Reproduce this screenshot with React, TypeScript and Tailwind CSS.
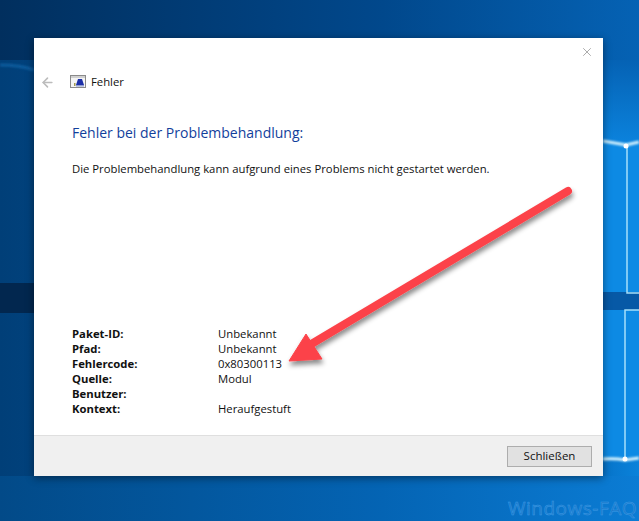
import { X, ArrowLeft } from "lucide-react";

const details = [
  { label: "Paket-ID:", value: "Unbekannt" },
  { label: "Pfad:", value: "Unbekannt" },
  { label: "Fehlercode:", value: "0x80300113" },
  { label: "Quelle:", value: "Modul" },
  { label: "Benutzer:", value: "" },
  { label: "Kontext:", value: "Heraufgestuft" },
];

const Wallpaper = () => (
  <svg className="absolute inset-0" width="639" height="521" viewBox="0 0 639 521">
    <defs>
      <linearGradient id="base" x1="0" y1="0" x2="1" y2="0">
        <stop offset="0" stopColor="#013f78" />
        <stop offset="0.9" stopColor="#0569bd" />
        <stop offset="1" stopColor="#0a82da" />
      </linearGradient>
      <linearGradient id="lower" x1="0" y1="0" x2="1" y2="0">
        <stop offset="0" stopColor="#024a88" />
        <stop offset="0.6" stopColor="#0464b4" />
        <stop offset="1" stopColor="#0b7cd4" />
      </linearGradient>
      <linearGradient id="top" x1="0" y1="0" x2="1" y2="0">
        <stop offset="0" stopColor="#012f5e" />
        <stop offset="0.6" stopColor="#01488c" />
        <stop offset="1" stopColor="#0562b4" />
      </linearGradient>
      <linearGradient id="upperRight" x1="0" y1="0" x2="0" y2="1">
        <stop offset="0" stopColor="#0562b4" />
        <stop offset="1" stopColor="#0b82dc" />
      </linearGradient>
      <filter id="glow" x="-20%" y="-200%" width="140%" height="500%">
        <feGaussianBlur stdDeviation="1.2" />
      </filter>
    </defs>
    <rect width="639" height="521" fill="url(#base)" />
    <rect width="639" height="60" fill="url(#top)" />
    <rect x="603" y="60" width="36" height="82" fill="url(#upperRight)" />
    <rect y="476" width="639" height="45" fill="url(#lower)" />
    <path d="M0 65 Q20 65 34 70" stroke="#1468ac" strokeWidth="3" fill="none" opacity="0.7" filter="url(#glow)" />
    <rect y="283" width="34" height="30" fill="#02274f" />
    {/* window panes on the right */}
    <rect x="603" y="142" width="36" height="150" fill="#0d8ae4" />
    <rect x="603" y="310" width="36" height="150" fill="#0d8ae4" />
    <rect x="603" y="292" width="36" height="18" fill="#0759a6" />
    <path d="M627 145 V293 H639 M625 459 V310 H639" stroke="#a5e0fa" strokeWidth="1.5" fill="none" />
    <path d="M603 141 L626 145 L639 142" stroke="#d0f0fd" strokeWidth="3" fill="none" filter="url(#glow)" />
    <path d="M603 459 Q615 458 625 460 L639 458" stroke="#d8f3fd" strokeWidth="3" fill="none" filter="url(#glow)" />
    <circle cx="625" cy="459" r="2.5" fill="#ffffff" />
    <circle cx="626" cy="146" r="2.5" fill="#ffffff" />
  </svg>
);

const ErrorIcon = () => (
  <svg width="16" height="14" viewBox="0 0 16 14">
    <rect x="0.5" y="0.5" width="15" height="12" fill="#f4f4f4" stroke="#8a8a8a" />
    <rect x="1" y="1" width="14" height="2" fill="#d0d0d0" />
    <path d="M6 10 L8 4 H12 L14 10Z" fill="#1c2fa8" />
    <rect x="6" y="10" width="8" height="1.5" fill="#8e9bd0" />
    <rect x="4" y="8" width="1.5" height="3" fill="#a09a50" />
  </svg>
);

const Arrow = () => (
  <svg className="absolute inset-0 pointer-events-none" width="639" height="521" viewBox="0 0 639 521">
    <defs>
      <filter id="shadow" x="-10%" y="-10%" width="120%" height="125%">
        <feDropShadow dx="1" dy="4" stdDeviation="2.5" floodColor="#000000" floodOpacity="0.45" />
      </filter>
    </defs>
    <g filter="url(#shadow)">
      <path d="M568 191 L308 346" stroke="#fc4349" strokeWidth="8" strokeLinecap="round" />
      <path d="M289 361 L306 334 L322 359Z" fill="#fc4349" stroke="#fc4349" strokeLinejoin="round" />
    </g>
  </svg>
);

export default function App() {
  return (
    <div className="relative w-[639px] h-[521px] overflow-hidden font-['Open_Sans','Noto_Sans',sans-serif] text-[#111111]">
      <Wallpaper />

      <div className="relative pl-[34px] pt-[38px]">
        <div className="flex flex-col w-[569px] h-[438px] bg-white shadow-[0_2px_8px_rgba(0,0,0,0.45)]">
          <div className="flex justify-end pt-[7px] pr-[9px] h-[26px]">
            <X className="w-[14px] h-[14px] text-[#8c8c8c]" strokeWidth={1.25} />
          </div>

          <div className="flex items-center h-[36px] pl-[6px]">
            <ArrowLeft className="w-[15px] h-[15px] text-[#bcbcbc]" strokeWidth={2.5} />
            <div className="ml-[15px] flex items-center gap-[5px]">
              <ErrorIcon />
              <span className="text-[11.3px]">Fehler</span>
            </div>
          </div>

          <div className="flex flex-col flex-1 pl-[38px]">
            <h1 className="mt-[23px] text-[14px] leading-[20px] text-[#123f9c]">
              Fehler bei der Problembehandlung:
            </h1>
            <p className="mt-[18px] text-[11.3px] leading-[16px]">
              Die Problembehandlung kann aufgrund eines Problems nicht gestartet werden.
            </p>

            <div className="mt-auto pb-[19px] grid grid-cols-[146px_1fr] text-[11.3px] leading-[15px]">
              {details.map((row) => (
                <div key={row.label} className="contents">
                  <span className="font-bold">{row.label}</span>
                  <span>{row.value}</span>
                </div>
              ))}
            </div>
          </div>

          <div className="flex items-center justify-end h-[41px] pr-[11px] bg-[#f0f0f0] border-t border-[#dfdfdf]">
            <button className="w-[85px] h-[21px] bg-[#e1e1e1] border border-[#adadad] text-[11.5px] leading-none">
              Schließen
            </button>
          </div>
        </div>
      </div>

      <Arrow />

      <span className="absolute right-[2px] bottom-0 text-[19px] leading-[26px] tracking-[0.5px] whitespace-nowrap text-[#1a78c8] [-webkit-text-stroke:0.5px_#3d9be6]">
        Windows-FAQ
      </span>
    </div>
  );
}
